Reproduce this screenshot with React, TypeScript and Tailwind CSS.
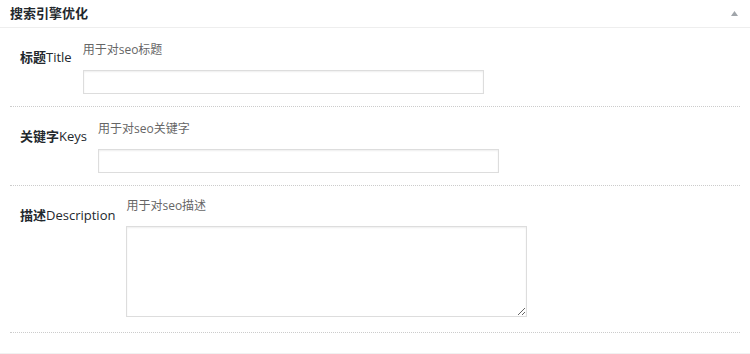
import React from "react";

type Field = {
  cn: string;
  en: string;
  help: string;
  multiline?: boolean;
};

const fields: Field[] = [
  { cn: "标题", en: "Title", help: "用于对seo标题" },
  { cn: "关键字", en: "Keys", help: "用于对seo关键字" },
  { cn: "描述", en: "Description", help: "用于对seo描述", multiline: true },
];

export default function App() {
  return (
    <div className="w-[750px] h-[354px] bg-[#f1f1f1] font-['Open_Sans','Noto_Sans_CJK_SC',sans-serif] text-[#23282d] overflow-hidden">
      <div className="bg-white pb-[20px]">
        {/* Header */}
        <div className="h-[28px] flex items-center justify-between pl-[10px] pr-[12px] border-b border-[#eeeeee]">
          <h2 className="text-[13px] font-bold leading-none">搜索引擎优化</h2>
          <svg width="7" height="5" viewBox="0 0 7 5">
            <path d="M3.5 0 L7 5 L0 5 Z" fill="#a0a5aa" />
          </svg>
        </div>

        {/* Rows */}
        {fields.map((f) => (
          <div
            key={f.en}
            className="mx-[10px] flex items-start gap-[11px] pl-[10px] border-b border-dotted border-[#cccccc]"
          >
            <div className="pt-[20px] text-[13px] font-medium leading-[18px] whitespace-nowrap">
              <span className="font-bold">{f.cn}</span>
              {f.en}
            </div>
            <div className={f.multiline ? "pt-[13px] pb-[15px]" : "pt-[15px] pb-[12px]"}>
              <p className="text-[12px] leading-[14px] text-[#666666] mb-[13px]">{f.help}</p>
              {f.multiline ? (
                <textarea className="block w-[401px] h-[91px] border border-[#dddddd] bg-white shadow-[inset_0_1px_2px_rgba(0,0,0,0.07)] outline-none" />
              ) : (
                <input
                  type="text"
                  className="block w-[401px] h-[24px] border border-[#dddddd] bg-white shadow-[inset_0_1px_2px_rgba(0,0,0,0.07)] outline-none"
                />
              )}
            </div>
          </div>
        ))}
      </div>
    </div>
  );
}
